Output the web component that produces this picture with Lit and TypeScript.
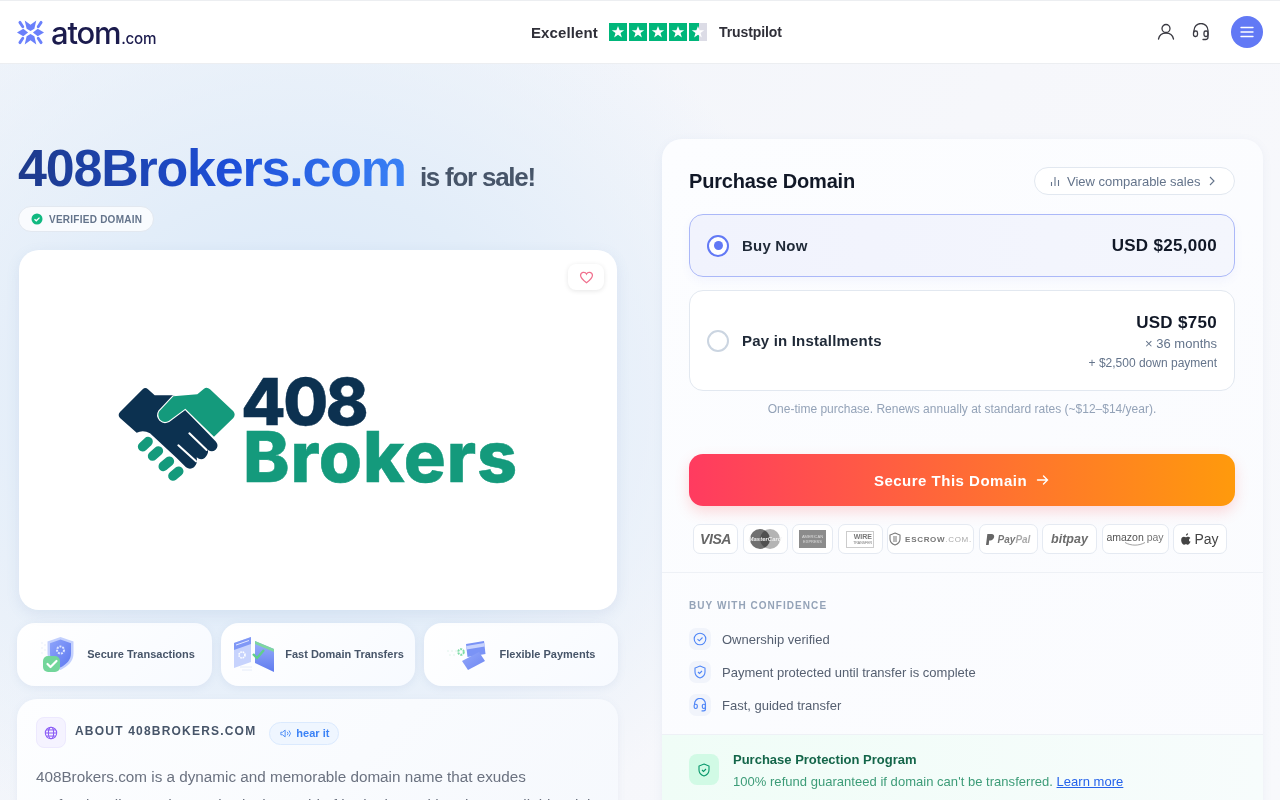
import { LitElement, html, css, svg } from "lit";
import { customElement } from "lit/decorators.js";

const star = svg`<path d="M9 3l1.600 4.300h4.600l-3.700 2.700 1.400 4.500L9 11.800l-3.900 2.700 1.400-4.500-3.700-2.700h4.600z" fill="#fff"/>`;

const handshake = html`<svg class="hands" viewBox="0 0 420 360" width="140" height="120">
  <path fill="#0c3150" d="M30 126 L98 58 Q106 50 114 58 L134 76 L210 76 L228 122 L318 215 Q328 228 316 240 Q306 248 294 240 Q296 252 284 264 Q272 272 260 262 Q264 280 252 292 Q240 300 228 292 L200 264 L120 190 Q100 178 80 188 L30 144 Q22 135 30 126 Z"/>
  <path fill="#149a7c" stroke="#fff" stroke-width="7" paint-order="stroke" d="M148 124 L190 79 L262 73 L282 56 Q291 50 300 58 L370 124 Q378 134 370 144 L312 200 L226 116 L176 153 Q162 160 151 150 Q140 136 148 124 Z"/>
  <g stroke="#fff" stroke-width="6" stroke-linecap="round"><line x1="238" y1="190" x2="290" y2="240"/><line x1="205" y1="226" x2="258" y2="274"/></g>
  <g stroke="#149a7c" stroke-width="29" stroke-linecap="round"><line x1="98" y1="230" x2="114" y2="215"/><line x1="128" y1="258" x2="145" y2="243"/><line x1="160" y1="289" x2="178" y2="274"/><line x1="189" y1="318" x2="206" y2="304"/></g>
</svg>`;

const shieldIcon = html`<svg viewBox="0 0 48 40" width="48" height="40">
  <defs><linearGradient id="g1" x1="0" y1="0" x2="1" y2="1"><stop offset="0" stop-color="#8ea4fb"/><stop offset="1" stop-color="#5d78f0"/></linearGradient></defs>
  <g fill="#dfe8f5"><circle cx="8" cy="8" r=".7"/><circle cx="8" cy="13" r=".7"/><circle cx="8" cy="18" r=".7"/><circle cx="11" cy="10" r=".7"/><circle cx="11" cy="15" r=".7"/></g>
  <path d="M26.500 2l13 4.500v12c0 8-6 13-13 16.500-7-3.500-13-8.500-13-16.500v-12z" fill="#c3d0fd"/>
  <path d="M26.500 4.500l10.500 3.700v10.300c0 6.500-4.500 10.500-10.500 14-6-3.500-10.500-7.500-10.500-14V8.200z" fill="url(#g1)"/>
  <circle cx="26.500" cy="15" r="3.500" fill="none" stroke="#dfe6ff" stroke-width="2" stroke-dasharray="2 1"/>
  <rect x="9" y="21" width="17" height="16" rx="5" fill="#73d69b"/>
  <path d="M13.500 29l3 3 6-6" fill="none" stroke="#fff" stroke-width="2.200" stroke-linecap="round" stroke-linejoin="round"/>
</svg>`;

const transferIcon = html`<svg viewBox="0 0 48 40" width="48" height="40">
  <defs><linearGradient id="g2" x1="0" y1="0" x2="0" y2="1"><stop offset="0" stop-color="#9bb0fa"/><stop offset="1" stop-color="#5f7bef"/></linearGradient></defs>
  <path d="M2 8l17-6v25L2 33z" fill="#c7d3fd"/><path d="M2 8l17-6v7L2 15z" fill="#8098f6"/>
  <path d="M4 10l13-4.500" stroke="#e3e9ff" stroke-width="1"/>
  <circle cx="10" cy="20" r="3" fill="none" stroke="#fff" stroke-width="1.600" stroke-dasharray="1.600 .8"/>
  <g stroke="#e6ecfa" stroke-width="1"><line x1="8" y1="32" x2="20" y2="32"/><line x1="10" y1="35" x2="20" y2="35"/></g>
  <path d="M23 6l19 8v23l-19-9z" fill="url(#g2)"/><path d="M23 6l19 8v3L23 9z" fill="#7ed6a0"/>
  <path d="M21 19l4 4 7-8" fill="none" stroke="#5fcf8c" stroke-width="2.400"/>
</svg>`;

const cardIcon = html`<svg viewBox="0 0 48 40" width="48" height="40">
  <defs><linearGradient id="g3" x1="0" y1="0" x2="1" y2="1"><stop offset="0" stop-color="#93a8fa"/><stop offset="1" stop-color="#6d86f2"/></linearGradient></defs>
  <g stroke="#e2f4ec" stroke-width="1" stroke-dasharray="2 2"><line x1="0" y1="16" x2="10" y2="16"/><line x1="2" y1="20" x2="10" y2="20"/></g>
  <circle cx="14" cy="17" r="2.800" fill="none" stroke="#7fdca6" stroke-width="2" stroke-dasharray="2 1"/>
  <path d="M19 9l18-3 1.500 13-18 3z" fill="#7a93f6"/><path d="M19.200 11l18-3 .5 3.500-18 3z" fill="#c8d3fd"/>
  <path d="M15 26l17-9 6 9-17 9z" fill="url(#g3)"/>
</svg>`;

@customElement("app-root")
export class AppRoot extends LitElement {
  static styles = css`
    :host { display: block; height: 800px; overflow: hidden; font-family: "Liberation Sans", Arial, sans-serif; color: #1f2937;
      background: radial-gradient(ellipse 520px 480px at 300px 400px, #d8e7f9 0%, #e2edf9 45%, rgba(240,244,250,0) 100%), linear-gradient(120deg, #f0f4fa 0%, #f6f7fb 60%, #f8f9fc 100%); }
    * { box-sizing: border-box; }
    svg { display: block; flex: none; }
    header { height: 64px; background: #fff; border-top: 1px solid #eceef1; border-bottom: 1px solid #eceef1; padding: 0 17px; display: flex; align-items: center; justify-content: space-between; }
    .brand { display: flex; align-items: center; width: 140px; gap: 7px; }
    .brand-text { color: #1b1b4d; font-family: Inter, sans-serif; display: flex; align-items: baseline; white-space: nowrap; }
    .atom { font-size: 31px; font-weight: 500; letter-spacing: -1.2px; line-height: 1; }
    .dotcom { font-size: 15.2px; font-weight: 500; letter-spacing: -.3px; margin-left: 1px; }
    .trust { display: flex; align-items: center; width: 251px; margin-left: -1px; }
    .excellent { font-size: 15px; font-weight: 700; color: #2f2f38; letter-spacing: .1px; width: 78px; }
    .stars { display: flex; gap: 2px; width: 110px; }
    .tp-star { width: 18px; height: 18px; background: #00b67a; }
    .tp-star.half { background: linear-gradient(90deg, #00b67a 54%, #dcdce6 54%); }
    .tp { font-size: 14px; font-weight: 700; color: #2f2f38; letter-spacing: -.1px; }
    .actions { display: flex; align-items: center; width: 106px; }
    .head-ic { margin-left: 17px; }
    .menu { width: 32px; height: 32px; border-radius: 50%; background: #6279f5; display: flex; align-items: center; justify-content: center; margin-left: 21px; }

    main { display: grid; grid-template-columns: 601px 601px; gap: 44px; padding: 75px 17px 0; }
    .heading { display: flex; align-items: baseline; gap: 14px; padding-left: 1px; height: 59px; }
    h1 { margin: 0; font-size: 52px; line-height: 59px; font-weight: 700; letter-spacing: -1.2px; background: linear-gradient(90deg, #1e3a8a 0%, #1d4ed8 55%, #3b82f6 100%); -webkit-background-clip: text; background-clip: text; color: transparent; }
    .sale { font-size: 26px; font-weight: 700; color: #475569; letter-spacing: -1.25px; }
    .verified { display: inline-flex; align-items: center; gap: 6px; margin: 8px 0 0 1px; height: 26px; padding: 0 11px 0 12px; border-radius: 13px; background: rgba(255,255,255,.75); border: 1px solid #e2e8f0; font-size: 10px; font-weight: 700; letter-spacing: .25px; color: #64748b; }
    .image-card { position: relative; margin: 18px 1px 0 2px; height: 360px; border-radius: 20px; background: #fff; box-shadow: 0 4px 14px rgba(100,130,180,.12); display: flex; align-items: center; justify-content: center; padding-right: 8px; }
    .heart { position: absolute; top: 14px; right: 13px; width: 36px; height: 26px; background: #fff; border-radius: 8px; box-shadow: 0 1px 5px rgba(0,0,0,.1); display: flex; align-items: center; justify-content: center; }
    .logo-text { font-family: Inter, sans-serif; font-weight: 800; display: flex; flex-direction: column; margin-left: -7px; margin-top: -2px; width: 275px; }
    .l408 { color: #0c3150; font-size: 65px; line-height: 54px; letter-spacing: -2.6px; margin-left: -2px; -webkit-text-stroke: .5px #0c3150; }
    .lbro { color: #149a7c; font-size: 70px; line-height: 55px; letter-spacing: .9px; -webkit-text-stroke: .5px #149a7c; }
    .features { display: grid; grid-template-columns: 195px 194px 194px; gap: 9px; margin-top: 13px; }
    .feature { height: 63px; border-radius: 18px; background: linear-gradient(135deg, #fff, #f7faff); box-shadow: 0 2px 8px rgba(100,130,180,.1); display: flex; align-items: center; justify-content: center; gap: 5px; font-size: 11px; font-weight: 700; color: #475569; }
    .feature span { margin-top: -2px; }
    .about { margin-top: 13px; height: 200px; border-radius: 20px; padding: 18px 19px; background: linear-gradient(135deg, #fdfeff, #f5f8fd); box-shadow: 0 2px 8px rgba(100,130,180,.08); }
    .about-head { display: flex; align-items: center; }
    .globe { width: 30px; height: 31px; border-radius: 8px; background: #f5f3ff; border: 1px solid #ede9fe; display: flex; align-items: center; justify-content: center; margin-right: 9px; }
    .about-title { font-size: 12px; font-weight: 700; letter-spacing: 1.2px; color: #475569; margin-right: 13px; margin-top: -3px; }
    .hear { display: flex; align-items: center; gap: 4px; height: 23px; padding: 0 9px 0 10px; border-radius: 12px; background: #eff6ff; border: 1px solid #dbeafe; font-size: 11px; font-weight: 700; color: #3b82f6; margin-top: 1px; }
    .about p { margin: 15px 0 0; font-size: 15.25px; line-height: 28px; color: #6b7280; }

    .panel { height: 720px; border-radius: 20px 20px 0 0; background: linear-gradient(135deg, #fcfdff, #fafbfe); box-shadow: 0 2px 10px rgba(100,130,180,.08); }
    .top { padding: 28px 28px 18px 27px; border-bottom: 1px solid #eef1f6; }
    .title-row { display: flex; align-items: center; justify-content: space-between; height: 28px; }
    h2 { margin: 0; font-size: 20px; font-weight: 700; color: #111827; letter-spacing: -.2px; }
    .compare { display: flex; align-items: center; height: 28px; width: 201px; padding-left: 14px; border-radius: 14px; border: 1px solid #e2e8f0; background: #fff; font-size: 13px; color: #64748b; }
    .compare span { margin: 0 8px 0 6px; }
    .option { display: flex; align-items: center; justify-content: space-between; padding: 0 17px; border-radius: 14px; background: #fff; border: 1px solid #e2e8f0; }
    .option.on { margin-top: 19px; height: 63px; background: linear-gradient(90deg, #f1f3fd, #f4f6fd); border: 1.5px solid #abb8f8; box-shadow: 0 4px 10px rgba(98,121,245,.06); }
    .option.off { margin-top: 13px; height: 101px; }
    .opt-left { display: flex; align-items: center; gap: 13px; font-size: 15px; font-weight: 700; letter-spacing: .2px; color: #1f2937; }
    .radio { width: 22px; height: 22px; border-radius: 50%; border: 2px solid #cbd5e1; background: #fff; }
    .radio.sel { border: 2.5px solid #6279f5; display: flex; align-items: center; justify-content: center; }
    .radio.sel i { width: 9px; height: 9px; border-radius: 50%; background: #6279f5; }
    .price { font-size: 17px; font-weight: 700; color: #111827; letter-spacing: .3px; }
    .right { text-align: right; padding-top: 4px; }
    .months { font-size: 13px; color: #64748b; line-height: 20px; margin-top: 1px; }
    .down { font-size: 12px; color: #64748b; line-height: 18px; }
    .note { margin-top: 10px; text-align: center; font-size: 12px; line-height: 17px; color: #94a3b8; }
    .cta { margin-top: 36px; height: 52px; border-radius: 14px; background: linear-gradient(90deg, #ff3b60, #ff9a0c); box-shadow: 0 6px 14px rgba(255,90,90,.22); display: flex; align-items: center; justify-content: center; gap: 9px; font-size: 15px; font-weight: 700; letter-spacing: .5px; color: #fff; }
    .pays { display: flex; gap: 4.5px; margin-top: 18px; padding-left: 4px; }
    .pay { height: 30px; border: 1px solid #e5eaf2; border-radius: 7px; background: #fff; display: flex; align-items: center; justify-content: center; color: #666; white-space: nowrap; gap: 3px; }
    .visa { width: 45px; font: italic 700 14px "Liberation Sans", sans-serif; letter-spacing: -.4px; }
    .mc { width: 45px; position: relative; } .amex { width: 41px; } .wire { width: 45px; } .escrow { width: 87px; font-size: 8px; font-weight: 700; letter-spacing: .7px; color: #777; gap: 4px; } .escrow span { font-weight: 400; color: #aaa; margin-left: -4px; } .paypal { width: 59px; font: italic 700 10px "Liberation Sans", sans-serif; color: #777; } .paypal span { color: #aaa; margin-left: -3px; } .bitpay { width: 55px; font: italic 700 12.5px "Liberation Sans", sans-serif; color: #6c6c6c; } .amazon { width: 67px; font-size: 10.5px; color: #777; flex-direction: column; gap: 0; line-height: 10px; } .amazon b { font-weight: 400; color: #555; } .apple { width: 54px; font-size: 14px; color: #444; }
    .amex b { display: block; width: 27px; height: 18px; background: #8b8b8b; color: #ddd; font-size: 4px; line-height: 5px; text-align: center; padding-top: 4px; font-weight: 400; white-space: normal; }
    .wire b { display: block; width: 28px; height: 17px; border: 1px solid #ccc; font-size: 7px; line-height: 8px; color: #777; text-align: right; padding: 1px 1px 0 0; }
    .wire small { display: block; font-size: 3.5px; line-height: 4px; font-weight: 400; }
    .mc i { display: block; width: 20px; height: 20px; border-radius: 50%; }
    .mc .m1 { background: #707070; } .mc .m2 { background: #b4b4b4; margin-left: -13px; mix-blend-mode: multiply; }
    .mc em { position: absolute; font: italic 700 6px "Liberation Sans", sans-serif; color: #eee; }
    .confidence { padding: 27px 27px 0; height: 162px; border-bottom: 1px solid #eef1f6; }
    .conf-title { font-size: 10px; font-weight: 700; letter-spacing: 1.05px; color: #94a3b8; line-height: 12px; }
    .conf-list { margin-top: 16px; display: flex; flex-direction: column; gap: 11px; }
    .conf { display: flex; align-items: center; gap: 11px; font-size: 13px; color: #566071; margin-bottom: 0; }
    .tile { width: 22px; height: 22px; border-radius: 7px; background: #f1f4fb; display: flex; align-items: center; justify-content: center; }
    .protect { padding: 19px 27px; height: 100px; display: flex; gap: 14px; align-items: flex-start; background: linear-gradient(90deg, #f0fdf7, #f7fcfc); }
    .p-tile { width: 30px; height: 31px; border-radius: 8px; background: #d1fae5; display: flex; align-items: center; justify-content: center; }
    .p-title { font-size: 13px; font-weight: 700; color: #14664a; line-height: 14px; margin-top: -1px; }
    .p-sub { font-size: 13px; color: #3d9c78; line-height: 16px; margin-top: 7px; letter-spacing: .03px; }
    .p-sub a { color: #2563eb; text-decoration: underline; }
  `;

  private stars() {
    return [0, 1, 2, 3, 4].map((i) => html`<div class="tp-star ${i === 4 ? "half" : ""}"><svg viewBox="0 0 18 18" width="18" height="18">${star}</svg></div>`);
  }

  render() {
    return html`
      <header>
        <div class="brand">
          <svg viewBox="0 0 28 28" width="27" height="27" fill="#6a80fb">
            <path d="M8 1.500L14 6l6-4.500-2 8.500-4 2.500-4-2.500z"/>
            <path d="M8 26.500L14 22l6 4.500-2-8.500-4-2.500-4 2.500z"/>
            <path d="M0 14l6.500-3.800L11.500 14l-5 3.800z"/>
            <path d="M28 14l-6.500-3.800L16.500 14l5 3.800z"/>
            <g stroke="#6a80fb" stroke-width="3" stroke-linecap="round"><line x1="3" y1="3.500" x2="6" y2="8"/><line x1="25" y1="3.500" x2="22" y2="8"/><line x1="3" y1="24.500" x2="6" y2="20"/><line x1="25" y1="24.500" x2="22" y2="20"/></g>
          </svg>
          <div class="brand-text"><span class="atom">atom</span><span class="dotcom">.com</span></div>
        </div>
        <div class="trust"><span class="excellent">Excellent</span><div class="stars">${this.stars()}</div><span class="tp">Trustpilot</span></div>
        <div class="actions">
          <svg viewBox="0 0 18 18" width="18" height="18" fill="none" stroke="#3a3a42" stroke-width="1.300" stroke-linecap="round"><circle cx="9" cy="5.500" r="4"/><path d="M1.500 16c.8-3.500 3.500-6 7.500-6s6.700 2.500 7.500 6"/></svg>
          <svg class="head-ic" viewBox="0 0 18 18" width="18" height="18" fill="none" stroke="#3a3a42" stroke-width="1.300" stroke-linecap="round"><path d="M2 9V7.500a7 7 0 0 1 14 0V14a2.500 2.500 0 0 1-2.500 2.500H11"/><rect x="1.500" y="8" width="4" height="5.500" rx="1.800"/><rect x="12" y="8" width="4" height="5.500" rx="1.800"/></svg>
          <div class="menu"><svg viewBox="0 0 14 12" width="14" height="12" stroke="#fff" stroke-width="1.400" stroke-linecap="round"><line x1="1" y1="1.500" x2="13" y2="1.500"/><line x1="1" y1="6" x2="13" y2="6"/><line x1="1" y1="10.500" x2="13" y2="10.500"/></svg></div>
        </div>
      </header>
      <main>
        <section>
          <div class="heading"><h1>408Brokers.com</h1><span class="sale">is for sale!</span></div>
          <div class="verified"><svg viewBox="0 0 12 12" width="12" height="12"><circle cx="6" cy="6" r="5.500" fill="#10b981"/><path d="M3.500 6.200l1.800 1.600 3.200-3.200" fill="none" stroke="#fff" stroke-width="1.300"/></svg>VERIFIED DOMAIN</div>
          <div class="image-card">
            <div class="heart"><svg viewBox="0 0 24 24" width="15" height="15" fill="none" stroke="#f0708e" stroke-width="2"><path d="M12 20.500C6 16 2.500 12.500 2.500 8.500A5 5 0 0 1 12 6.500a5 5 0 0 1 9.500 2c0 4-3.500 7.500-9.500 12z"/></svg></div>
            ${handshake}
            <div class="logo-text"><span class="l408">408</span><span class="lbro">Brokers</span></div>
          </div>
          <div class="features">
            <div class="feature">${shieldIcon}<span>Secure Transactions</span></div>
            <div class="feature">${transferIcon}<span>Fast Domain Transfers</span></div>
            <div class="feature">${cardIcon}<span>Flexible Payments</span></div>
          </div>
          <div class="about">
            <div class="about-head">
              <div class="globe"><svg viewBox="0 0 16 16" width="14" height="14" fill="none" stroke="#8b5cf6" stroke-width="1.200"><circle cx="8" cy="8" r="6.500"/><ellipse cx="8" cy="8" rx="3" ry="6.500"/><line x1="1.500" y1="8" x2="14.500" y2="8"/><line x1="2.500" y1="4.500" x2="13.500" y2="4.500"/><line x1="2.500" y1="11.500" x2="13.500" y2="11.500"/></svg></div>
              <span class="about-title">ABOUT 408BROKERS.COM</span>
              <div class="hear"><svg viewBox="0 0 14 12" width="12" height="11" fill="none" stroke="#3b82f6" stroke-width="1"><path d="M1 4.500h2L6 2v8L3 7.500H1z"/><path d="M8.500 4a3 3 0 0 1 0 4M10.500 2.500a5 5 0 0 1 0 7"/></svg>hear it</div>
            </div>
            <p>408Brokers.com is a dynamic and memorable domain name that exudes professionalism and expertise in the world of brokering. With only two syllables, it is</p>
          </div>
        </section>
        <section class="panel">
          <div class="top">
            <div class="title-row"><h2>Purchase Domain</h2>
              <div class="compare"><svg viewBox="0 0 12 12" width="12" height="12" stroke="#64748b" stroke-width="1.100"><line x1="2.500" y1="7" x2="2.500" y2="11"/><line x1="6" y1="2" x2="6" y2="11"/><line x1="9.500" y1="5" x2="9.500" y2="11"/></svg><span>View comparable sales</span><svg viewBox="0 0 8 10" width="8" height="10" fill="none" stroke="#64748b" stroke-width="1.100"><path d="M2 1l4 4-4 4"/></svg></div>
            </div>
            <div class="option on"><div class="opt-left"><div class="radio sel"><i></i></div>Buy Now</div><div class="price">USD $25,000</div></div>
            <div class="option off"><div class="opt-left"><div class="radio"></div>Pay in Installments</div>
              <div class="right"><div class="price">USD $750</div><div class="months">× 36 months</div><div class="down">+ $2,500 down payment</div></div></div>
            <div class="note">One-time purchase. Renews annually at standard rates (~$12–$14/year).</div>
            <div class="cta">Secure This Domain<svg viewBox="0 0 14 12" width="14" height="12" fill="none" stroke="#fff" stroke-width="1.400" stroke-linecap="round"><path d="M1.500 6h10M7.500 2l4 4-4 4"/></svg></div>
            <div class="pays">
              <div class="pay visa">VISA</div>
              <div class="pay mc"><i class="m1"></i><i class="m2"></i><em>MasterCard</em></div>
              <div class="pay amex"><b>AMERICAN EXPRESS</b></div>
              <div class="pay wire"><b>WIRE<small>TRANSFER</small></b></div>
              <div class="pay escrow"><svg viewBox="0 0 12 14" width="12" height="14" fill="none" stroke="#777" stroke-width="1.100"><path d="M6 1l5 2v4c0 3-2 5-5 6-3-1-5-3-5-6V3z"/><path d="M4 5h4M4 7h4M4 9h4"/></svg>ESCROW<span>.COM.</span></div>
              <div class="pay paypal"><svg viewBox="0 0 10 12" width="9" height="11" fill="#666"><path d="M1.500 0H6c2.500 0 3.500 1.500 3 3.500S6.500 7 5 7H3.500L3 12H0z"/></svg>Pay<span>Pal</span></div>
              <div class="pay bitpay">bitpay</div>
              <div class="pay amazon"><div><b>amazon</b> pay</div><svg viewBox="0 0 24 4" width="24" height="4" fill="none" stroke="#888" stroke-width=".8"><path d="M2 .5c6 3.500 14 3.500 20 0"/></svg></div>
              <div class="pay apple"><svg viewBox="0 0 12 14" width="10" height="12" fill="#444"><path d="M8.500 0c.1 1.500-1.200 3-2.600 2.900C5.700 1.500 7 .1 8.500 0zM11.500 10c-.6 1.600-1.800 3.800-3.200 3.800-.9 0-1.300-.6-2.400-.6s-1.500.6-2.400.6C2 13.800.2 10.800.2 8.200c0-2.500 1.600-3.900 3.200-3.900 1 0 1.800.7 2.400.7s1.500-.8 2.700-.8c.9 0 2 .5 2.700 1.500-2.300 1.300-1.900 4.500.3 4.300z"/></svg>Pay</div>
            </div>
          </div>
          <div class="confidence">
            <div class="conf-title">BUY WITH CONFIDENCE</div>
            <div class="conf-list">
              <div class="conf"><div class="tile"><svg viewBox="0 0 14 14" width="14" height="14" fill="none" stroke="#4f86f7" stroke-width="1.100"><circle cx="7" cy="7" r="5.800"/><path d="M4.500 7.200l1.800 1.600 3.200-3.300"/></svg></div>Ownership verified</div>
              <div class="conf"><div class="tile"><svg viewBox="0 0 14 14" width="14" height="14" fill="none" stroke="#4f86f7" stroke-width="1.100"><path d="M7 1l5 2v4c0 3-2 5-5 6-3-1-5-3-5-6V3z"/><path d="M5 7l1.500 1.500L9 6"/></svg></div>Payment protected until transfer is complete</div>
              <div class="conf"><div class="tile"><svg viewBox="0 0 18 18" width="14" height="14" fill="none" stroke="#4f86f7" stroke-width="1.500"><path d="M2 9V7.500a7 7 0 0 1 14 0V14a2.500 2.500 0 0 1-2.500 2.500H11"/><rect x="1.500" y="8" width="4" height="5.500" rx="1.800"/><rect x="12" y="8" width="4" height="5.500" rx="1.800"/></svg></div>Fast, guided transfer</div>
            </div>
          </div>
          <div class="protect">
            <div class="p-tile"><svg viewBox="0 0 14 14" width="14" height="14" fill="none" stroke="#059669" stroke-width="1.100"><path d="M7 1l5 2v4c0 3-2 5-5 6-3-1-5-3-5-6V3z"/><path d="M5 7l1.500 1.500L9 6"/></svg></div>
            <div><div class="p-title">Purchase Protection Program</div><div class="p-sub">100% refund guaranteed if domain can't be transferred. <a>Learn more</a></div></div>
          </div>
        </section>
      </main>
    `;
  }
}
